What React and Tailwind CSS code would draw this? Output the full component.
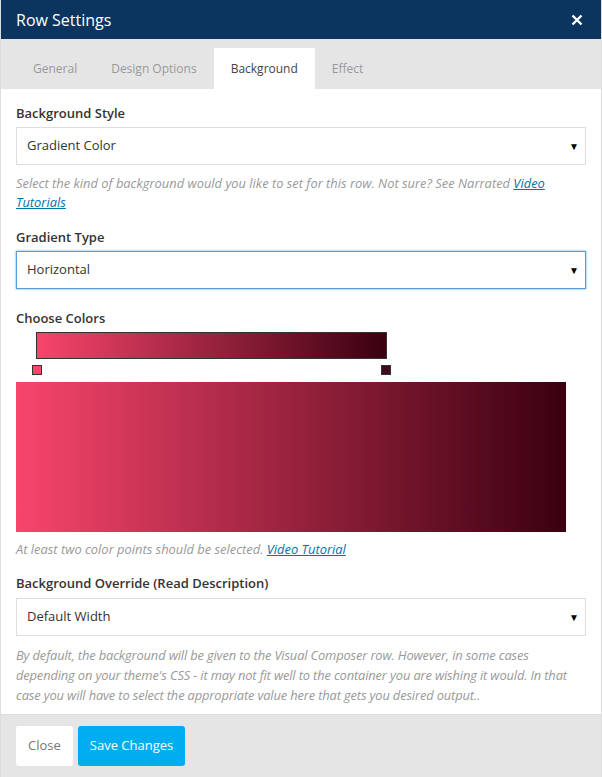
import React from "react";

const Caret = () => (
  <span className="text-[10px] text-black leading-none">&#9660;</span>
);

const Select = ({ value, focused }) => (
  <div
    className={`h-[38px] flex items-center justify-between pl-[10px] pr-[6px] bg-white border ${
      focused ? "border-[#5b9dd9] shadow-[0_0_2px_rgba(30,140,190,0.8)]" : "border-[#dddddd]"
    }`}
  >
    <span className="text-[13px] text-[#333]">{value}</span>
    <Caret />
  </div>
);

const Label = ({ children, className = "" }) => (
  <div className={`text-[13px] leading-[18px] font-semibold text-[#333] ${className}`}>{children}</div>
);

const Help = ({ children, className = "" }) => (
  <p className={`text-[12.9px] italic text-[#999] leading-[19px] ${className}`}>{children}</p>
);

const grad = "bg-[linear-gradient(to_right,#f8456c,#3a0010)]";

export default function App() {
  const tabs = ["General", "Design Options", "Background", "Effect"];

  return (
    <div
      className="w-[602px] h-[777px] flex flex-col bg-white border-x border-[#dddddd] overflow-hidden"
      style={{ fontFamily: '"Open Sans", sans-serif' }}
    >
      {/* Header */}
      <div className="h-[39px] shrink-0 bg-[#0b345e] flex items-center justify-between px-[15px]">
        <span className="text-white text-[16px]">Row Settings</span>
        <svg width="12" height="12" viewBox="0 0 12 12" className="mr-[3px]">
          <path d="M1.5 1.5 L10.5 10.5 M10.5 1.5 L1.5 10.5" stroke="white" strokeWidth="2.4" />
        </svg>
      </div>

      {/* Tabs */}
      <div className="h-[50px] shrink-0 bg-[#e5e5e5] flex items-end pl-[15px]">
        {tabs.map((t) => (
          <div
            key={t}
            className={`h-[41px] flex items-center px-[17px] text-[12px] ${
              t === "Background" ? "bg-white text-[#444]" : "text-[#999]"
            }`}
          >
            {t}
          </div>
        ))}
      </div>

      {/* Body */}
      <div className="flex-1 px-[15px] pt-[15px]">
        <Label>Background Style</Label>
        <div className="mt-[5px]">
          <Select value="Gradient Color" />
        </div>
        <Help className="mt-[9px]">
          Select the kind of background would you like to set for this row. Not sure? See Narrated{" "}
          <a className="text-[#0073aa] underline">Video</a>{" "}
          <a className="text-[#0073aa] underline">Tutorials</a>
        </Help>

        <Label className="mt-[16px]">Gradient Type</Label>
        <div className="mt-[5px]">
          <Select value="Horizontal" focused />
        </div>

        <Label className="mt-[20px]">Choose Colors</Label>
        <div className="mt-[5px] ml-[20px] w-[351px]">
          <div className={`h-[27px] border border-[#333] ${grad}`} />
          <div className="flex justify-between mt-[6px] -mx-[4px]">
            <div className="w-[10px] h-[10px] border border-[#333] bg-[#f8456c]" />
            <div className="w-[10px] h-[10px] border border-[#333] bg-[#3f0a1a]" />
          </div>
        </div>
        <div className={`mt-[7px] w-[550px] h-[150px] ${grad}`} />
        <Help className="mt-[8px]">
          At least two color points should be selected.{" "}
          <a className="text-[#0073aa] underline">Video Tutorial</a>
        </Help>

        <Label className="mt-[15px]">Background Override (Read Description)</Label>
        <div className="mt-[6px]">
          <Select value="Default Width" />
        </div>
        <Help className="mt-[9px] leading-[20px] tracking-[-0.15px]">
          By default, the background will be given to the Visual Composer row. However, in some cases
          depending on your theme's CSS - it may not fit well to the container you are wishing it would. In that
          case you will have to select the appropriate value here that gets you desired output..
        </Help>
      </div>

      {/* Footer */}
      <div className="h-[63px] shrink-0 bg-[#e5e5e5] border-t border-[#dddddd] flex items-center gap-[5px] px-[15px]">
        <button className="h-[40px] px-[12px] bg-white rounded-[3px] text-[13px] text-[#777]">Close</button>
        <button className="h-[40px] px-[12px] bg-[#00adef] rounded-[3px] text-[13px] text-white">
          Save Changes
        </button>
      </div>
    </div>
  );
}
